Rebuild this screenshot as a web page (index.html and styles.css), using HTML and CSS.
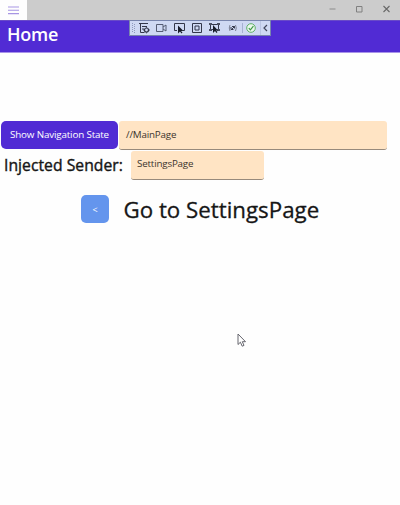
FILE: index.html
```html
<!DOCTYPE html>
<html lang="en">
<head>
<meta charset="utf-8">
<title>Home</title>
<link rel="stylesheet" href="styles.css">
</head>
<body>
<header class="titlebar">
  <div class="menu"><svg width="11" height="9" viewBox="0 0 11 9"><path d="M0 1h11M0 4.300h11M0 7.600h11" stroke="#a795e3" stroke-width="1.100"/></svg></div>
  <div class="controls">
    <svg width="7" height="9" viewBox="0 0 7 9"><path d="M0.500 5h6" stroke="#8c8c8c"/></svg>
    <svg width="7" height="9" viewBox="0 0 7 9"><path d="M.5 2.500h5.500v5.500h-5.500z" fill="none" stroke="#808080"/></svg>
    <svg width="7" height="9" viewBox="0 0 7 9"><path d="M.5 2l6 6m0-6l-6 6" stroke="#686868" stroke-width="1.100"/></svg>
  </div>
</header>
<div class="navbar"><h1 class="title">Home</h1></div>
<div class="toolbar">
  <svg width="142" height="16" viewBox="0 0 142 16" fill="none" stroke="#33374a">
    <rect x=".5" y=".5" width="141" height="15" fill="#cfd9f3" stroke="#7885ad"/>
    <path d="M3.500 3v10M5.500 4v9" stroke="#8f9abd" stroke-dasharray="1 1"/>
    <path d="M10 3.500h9M11.500 4v8.500h4M13 6.500h5M13 9h2"/>
    <circle cx="17.500" cy="10" r="2" stroke-width="1.200"/><path d="M17.500 6.700v1M17.500 12.300v1M14.200 10h1M19.800 10h1"/>
    <path d="M27.500 4.500h6.500v7h-6.500zM34 7l3-2v6l-3-2" stroke="#555c73"/>
    <path d="M48 10.500h-2.500v-7h10v7h-1.500"/><path d="M49 5.500v8l2-2 1.500 2 1-1-1.500-1.500h2.500z" fill="#171b28" stroke="none"/>
    <path d="M63.500 3.500h9v9h-9zM66 6h4v4h-4z"/>
    <path d="M82.500 4.500h6M82.500 9.500h3M81.500 5v4M89.500 5v4"/><path d="M80 3h3v2h-3zM88 3h3v2h-3zM80 9h3v2h-3zM88 9h3v2h-3z" fill="#4b5063" stroke="none"/><path d="M84 5v8l2-2 1.500 2 1-1-1.500-1.500h2z" fill="#171b28" stroke="none"/>
    <path d="M101 5q-1.500 3 0 6M106.500 5q1.500 3 0 6" stroke="#7b8195"/><path d="M102 7v2.500h2.500M103 6.500h2.500v2M102.500 9.500l3-3" stroke="#353a4c"/>
    <path d="M113.500 3v10" stroke="#a6b1d1"/>
    <circle cx="122" cy="8" r="4.300" fill="#e9f8ec" stroke="#5faf67"/><path d="M119.800 8.100l1.600 1.700 3-3.600" stroke="#3e9848" stroke-width="1.200"/>
    <path d="M131.500 1v14" stroke="#bac5e3"/><path d="M138 5l-3 3 3 3" stroke="#41465c" stroke-width="1.200"/>
  </svg>
</div>
<main class="page">
  <div class="row">
    <button class="nav-button">Show Navigation State</button>
    <div class="entry state">//MainPage</div>
  </div>
  <div class="row sender-row">
    <span class="sender">Injected Sender:</span>
    <div class="entry source">SettingsPage</div>
  </div>
  <div class="row go-row">
    <button class="back-button">&lt;</button>
    <span class="go">Go to SettingsPage</span>
  </div>
</main>
<svg class="cursor" width="10" height="15" viewBox="0 0 10 15"><path d="M1 1v10.500l2.400-2.300 1.800 4 1.800-.8-1.700-3.700h3.200z" fill="#fff" stroke="#66666e"/></svg>
</body>
</html>
```
FILE: styles.css
```css
* { box-sizing: border-box; }
body { margin: 0; height: 505px; overflow: hidden; background: #fefefe; color: #161616; font-family: "Open Sans", sans-serif; }
svg { display: block; }
button { border: 0; padding: 0; color: #fff; font-family: inherit; }
.titlebar { display: flex; justify-content: space-between; height: 20px; background: #ccc; }
.menu { width: 27px; background: #fefefe; padding: 6px 0 0 8px; }
.controls { display: flex; gap: 20px; padding: 4px 10px 0 0; }
.navbar { height: 33px; padding: 1px 7px 0; background: #512bd4; border-top: 1px solid #694ac8; border-bottom: 1px solid #a893e9; }
.title { margin: 0; color: #fff; font-size: 18px; line-height: 25px; font-weight: 600; letter-spacing: -0.2px; }
.toolbar { position: absolute; left: 129px; top: 20px; }
.page { padding-top: 68px; }
.row { display: flex; }
.nav-button { width: 117px; height: 28px; margin-left: 1px; border-radius: 5px; background: #512bd4; font-size: 9.8px; letter-spacing: -0.15px; line-height: 28px; white-space: nowrap; }
.entry { height: 29px; background: #ffe4c4; border-bottom: 1px solid #978a7c; border-radius: 3px; padding-left: 7px; font-size: 9.8px; letter-spacing: -0.18px; line-height: 27px; color: #3b342d; }
.state { width: 268px; margin-left: 1px; }
.sender-row { margin-top: 1px; }
.sender { width: 127px; margin-left: 4px; font-size: 15.7px; letter-spacing: 0.04px; line-height: 28px; -webkit-text-stroke: 0.4px #161616; white-space: nowrap; }
.source { width: 133px; padding-left: 6px; line-height: 25px; }
.go-row { margin-top: 15px; }
.back-button { width: 28px; height: 28px; margin-left: 81px; border-radius: 5px; background: #6495ed; font-size: 9px; }
.go { margin-left: 14px; padding-left: 0.5px; font-size: 22.3px; line-height: 29px; -webkit-text-stroke: 0.3px #161616; white-space: nowrap; }
.cursor { position: absolute; left: 237px; top: 333px; }
```
